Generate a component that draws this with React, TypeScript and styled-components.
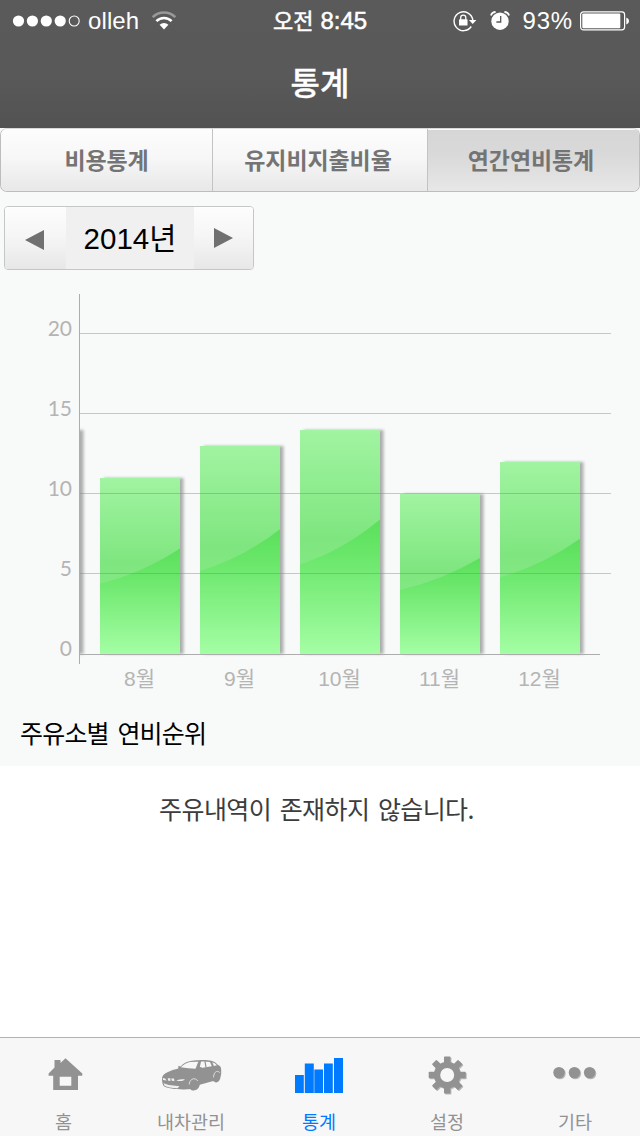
import React from "react";
import styled, { createGlobalStyle } from "styled-components";

const Global = createGlobalStyle`
  * { box-sizing: border-box; }
  body { margin: 0; background: #fff; font-family: "Liberation Sans", "Noto Sans CJK KR", sans-serif; }
  button { font: inherit; margin: 0; padding: 0; border: 0; background: none; }
`;

const Screen = styled.div`
  width: 640px;
  height: 1136px;
  display: flex;
  flex-direction: column;
  overflow: hidden;
  background: #fff;
`;

const Header = styled.header`
  height: 128px;
  flex: none;
  background: linear-gradient(#5a5a5a, #595959 60%, #525252);
  color: #fff;
`;

const StatusBar = styled.div`
  height: 40px;
  display: grid;
  grid-template-columns: 240px 160px 240px;
  align-items: center;
  font-size: 24px;
  line-height: 40px;
`;

const StatusLeft = styled.div`
  display: flex;
  align-items: center;
  padding-left: 12px;
`;

const StatusRight = styled.div`
  display: flex;
  align-items: center;
  justify-content: flex-end;
  gap: 13px;
  padding-right: 10px;
`;

const BatteryGroup = styled.div`
  display: flex;
  align-items: center;
  gap: 7px;
`;

const Carrier = styled.span`
  margin: 1px 12px 0 7px;
  letter-spacing: 0.1px;
`;

const Percent = styled.span`
  margin-top: 1px;
  letter-spacing: 0.8px;
`;

const Clock = styled.div`
  display: flex;
  justify-content: center;
  gap: 7px;
  -webkit-text-stroke: 0.5px #fff;
`;

const ClockLabel = styled.span`
  font-family: "Noto Sans CJK KR", sans-serif;
  font-size: 22px;
  line-height: 36px;
`;

const PageTitle = styled.h1`
  margin: 0;
  height: 88px;
  text-align: center;
  font: 500 32px/83px "Noto Sans CJK KR", sans-serif;
  -webkit-text-stroke: 0.3px #fff;
`;

const Body = styled.main`
  height: 638px;
  flex: none;
  display: flex;
  flex-direction: column;
  background: #f8faf9;
`;

const Tabs = styled.nav`
  height: 64px;
  flex: none;
  display: grid;
  grid-template-columns: 212px 215px 211px;
  border: 1px solid #bdbdbd;
  border-top-color: #d8d8d8;
  border-radius: 7px;
  overflow: hidden;
  background: #fafafa;
`;

const Tab = styled.button<{ $active?: boolean; $trim?: number }>`
  display: flex;
  justify-content: center;
  border-right: 1px solid #c3c3c3;
  margin-top: ${(p) => (p.$active ? "1px" : "0")};
  padding-right: ${(p) => p.$trim ?? 0}px;
  background: ${(p) =>
    p.$active ? "linear-gradient(#d6d6d6, #d9d9d9 40%, #e7e7e7)" : "linear-gradient(#fdfdfd, #f7f7f7 45%, #e8e8e8)"};
  color: #747474;
  font: 700 23px/${(p) => (p.$active ? 58 : 60)}px "Noto Sans CJK KR", sans-serif;
  letter-spacing: -0.1px;
  &:last-child { border-right: 0; }
`;

const YearPicker = styled.div`
  width: 250px;
  height: 64px;
  margin: 14px 0 0 4px;
  flex: none;
  display: grid;
  grid-template-columns: 61px 128px 59px;
  border: 1px solid #c6c6c6;
  border-radius: 4px;
  overflow: hidden;
`;

const YearStep = styled.button`
  display: flex;
  align-items: center;
  justify-content: center;
  background: linear-gradient(#fdfdfd, #f6f6f6 45%, #e7e7e7);
`;

const Year = styled.div`
  background: #f0f0f0;
  text-align: center;
  font-size: 29.5px;
  line-height: 63px;
  color: #000;
`;

const Chart = styled.svg`
  display: block;
  flex: none;
  margin-top: 14px;
`;

const AxisValue = styled.text`
  font-family: Lato, sans-serif;
  font-size: 21px;
  fill: #b4b4b4;
  text-anchor: end;
`;

const MonthLabel = styled.text`
  font-size: 21px;
  fill: #b4b4b4;
  text-anchor: middle;
`;

const SectionTitle = styled.h2`
  margin: 0;
  padding-left: 20px;
  font: 400 25px/56px "Noto Sans CJK KR", sans-serif;
  letter-spacing: -0.8px;
  word-spacing: 3.8px;
  color: #000;
`;

const Empty = styled.p`
  margin: 0;
  flex: 1;
  padding-right: 7px;
  text-align: center;
  font: 400 25px/84px "Noto Sans CJK KR", sans-serif;
  letter-spacing: -0.6px;
  word-spacing: 3.6px;
  color: #3c3c3c;
`;

const BottomBar = styled.nav`
  height: 99px;
  flex: none;
  display: grid;
  grid-template-columns: 127px repeat(4, 128px) 1px;
  border-top: 1px solid #b2b2b2;
  background: #f7f7f7;
`;

const NavItem = styled.button<{ $active?: boolean }>`
  display: flex;
  flex-direction: column;
  align-items: center;
  color: ${(p) => (p.$active ? "#007aff" : "#929292")};
  svg { display: block; margin-top: 14px; }
`;

const NavLabel = styled.span`
  margin-top: 6px;
  font: 400 18.5px/26px "Noto Sans CJK KR", sans-serif;
`;

const BASE = 370;
const UNIT = 16;
const bars = [
  { month: "8월", value: 11 },
  { month: "9월", value: 13 },
  { month: "10월", value: 14 },
  { month: "11월", value: 10 },
  { month: "12월", value: 12 },
];

function Bar({ x, value }: { x: number; value: number }) {
  const h = value * UNIT;
  const y = BASE - h;
  return (
    <g>
      <rect x={x + 4} y={y} width={79.5} height={h} fill="#6e6e6e" opacity={0.55} filter="url(#soft)" />
      <rect x={x} y={y} width={80} height={h} fill="url(#deep)" />
      <path
        d={`M${x} ${y}h80v${h * 0.4}Q${x + 42} ${y + h * 0.54} ${x} ${y + h * 0.6}z`}
        fill="url(#gloss)"
      />
    </g>
  );
}

function MileageChart() {
  return (
    <Chart width="640" height="420" viewBox="0 0 640 420">
      <defs>
        <linearGradient id="deep" x1="0" y1="0" x2="0" y2="1">
          <stop offset="0.4" stopColor="#5be05b" />
          <stop offset="0.55" stopColor="#69e669" />
          <stop offset="1" stopColor="#a4fea4" />
        </linearGradient>
        <linearGradient id="gloss" x1="0" y1="0" x2="0" y2="1">
          <stop offset="0" stopColor="#a1f4a1" />
          <stop offset="0.8" stopColor="#7fe67f" />
          <stop offset="1" stopColor="#82e882" />
        </linearGradient>
        <filter id="soft" x="-10%" y="-10%" width="120%" height="120%">
          <feGaussianBlur stdDeviation="1.4" />
        </filter>
        <clipPath id="plot">
          <rect x="80" y="0" width="560" height="373" />
        </clipPath>
      </defs>
      <g clipPath="url(#plot)">
        <Bar x={0} value={14} />
        {bars.map((b, i) => (
          <Bar key={b.month} x={100 + i * 100} value={b.value} />
        ))}
      </g>
      {[5, 10, 15, 20].map((v) => (
        <rect key={v} x={80} y={BASE - v * UNIT - 1} width={531} height={1} fill="#808080" opacity={0.42} />
      ))}
      <rect x={79} y={10} width={1} height={370} fill="#adadad" />
      <rect x={80} y={BASE} width={520} height={1} fill="#adadad" />
      {[0, 5, 10, 15, 20].map((v) => (
        <AxisValue key={v} x={72} y={BASE + 1.5 - v * UNIT}>
          {v}
        </AxisValue>
      ))}
      {bars.map((b, i) => (
        <MonthLabel key={b.month} x={139.5 + i * 100} y={402}>
          {b.month}
        </MonthLabel>
      ))}
    </Chart>
  );
}

const SignalIcon = () => (
  <svg width="69" height="12" viewBox="0 0 69 12">
    {[6.5, 20.4, 34.3, 48.2].map((x) => (
      <circle key={x} cx={x} cy="6" r="5.6" fill="#fff" />
    ))}
    <circle cx="62.2" cy="6" r="5" fill="none" stroke="#fff" strokeWidth="1.1" />
  </svg>
);

const WifiIcon = () => (
  <svg width="26" height="20" viewBox="0 0 26 20" fill="none">
    <path d="M1.7 6.1a16 16 0 0 1 22.6 0" stroke="#999" strokeWidth="2.6" />
    <path d="M5.4 10.2a10.8 10.8 0 0 1 15.2 0" stroke="#fff" strokeWidth="2.6" />
    <path d="M8.6 13.8a6.2 6.2 0 0 1 8.8 0L13 18.4z" fill="#fff" />
  </svg>
);

const RotationLockIcon = () => (
  <svg width="24" height="22" viewBox="0 0 24 22" fill="none">
    <path d="M18.3 16.5A9.4 9.4 0 1 1 19.8 10" stroke="#fff" strokeWidth="1.4" />
    <path d="M16 10h7.4l-3.7 4z" fill="#fff" />
    <rect x="6" y="9.2" width="8.5" height="6.3" rx="0.6" fill="#fff" />
    <path d="M7.7 9.8V7.6a2.55 2.55 0 0 1 5.1 0v2.2" stroke="#fff" strokeWidth="1.3" />
  </svg>
);

const AlarmIcon = () => (
  <svg width="20" height="20" viewBox="0 0 20 20" fill="none">
    <circle cx="10" cy="10.2" r="8.7" fill="#fff" />
    <path d="M1 4.5q.6-3 4.6-3.7M19 4.5q-.6-3-4.6-3.7" stroke="#fff" strokeWidth="1.8" />
    <path d="M10.7 5v6H6.4" stroke="#585858" strokeWidth="1.3" />
  </svg>
);

const BatteryIcon = () => (
  <svg width="50" height="20" viewBox="0 0 50 20">
    <rect x="0.6" y="0.9" width="44" height="18" rx="2.8" fill="none" stroke="#fff" strokeWidth="1.2" />
    <rect x="2.3" y="2.6" width="38" height="14.6" rx="1" fill="#fff" />
    <path d="M46.3 6.8h.5q2.2 1 2.2 3.2t-2.2 3.2h-.5z" fill="#fff" />
  </svg>
);

const Shadow = () => (
  <defs>
    <filter id="drop" x="-20%" y="-20%" width="150%" height="150%">
      <feDropShadow dx="1" dy="1" stdDeviation="0.7" floodColor="#777" floodOpacity="0.5" />
    </filter>
  </defs>
);

const HomeIcon = () => (
  <svg width="60" height="50" viewBox="0 0 60 50">
    <path
      d="M31.5 6.3 48.3 21.5v2.2H44V38H19.2V23.7h-4.6v-2.2L20.5 15.6V8h6v3z M25.7 24.8v9h11.6v-9z"
      fill="currentColor"
      fillRule="evenodd"
    />
  </svg>
);

const CarIcon = () => (
  <svg width="64" height="50" viewBox="0 0 64 50">
    <path
      d="M3.2 25C4.5 22.5 6 21.3 9 20c4-1.7 7-2.6 10.2-3.4l.3-2.8 2 .6C24 12 26 10.500 28.500 9.700 33 8.300 46 7.200 52.300 8.700 55.500 9.700 57.500 11.200 59 13c2.500 1 3 2.200 3.200 4.600V22L61.200 26.500c-.6 2.300-2 3.900-3.900 3.900-1.300 0-2.300-.5-3-1.400L40.800 32.800c-.8 3.600-3.100 5.700-6.100 5.700-1.500 0-2.700-.5-3.600-1.500C24 38 8 37.200 4.600 34 3.200 31.700 2.600 27.500 3.200 25z"
      fill="currentColor"
    />
    <path
      d="M21.8 15.300C25 12.300 27.500 10.700 31 10.100q3.500-.5 8.300-.4L36.500 16.700q-7-.1-14.700-1.400zM42 9.500q5-.3 9 .4l1.800 4.300-12.200 2zM53.300 10.300q3.200 1.200 4.600 3l-3 .7z"
      fill="#f7f7f7"
    />
    <path d="M46 9.400l1 6" stroke="currentColor" strokeWidth="1.2" />
    <ellipse cx="41.200" cy="16.200" rx="1.800" ry="1.300" fill="currentColor" />
    <path
      d="M3.800 26q2.800 0 3.800 2.400L4 28zM8.700 26.200h2.600v2.700l-2-.1zM12.200 26.400l2.800.2.500 2.300-2.700-.1zM17.500 28.800q1.500-2.100 8.300-1.500-1 2.400-8.300 1.500zM4.500 31.200q7 3.200 15.800 2.800l-1.500 2.300Q9.500 36 5.600 33.800z"
      fill="#f0f0f0"
    />
    <path d="M30.200 32.500c.2-4 3-6.300 6-5.600 1.200.3 2 1 2.500 2.100M54.600 25.500c0-3.600 1.600-6.100 3.700-6.100 1 0 1.900.4 2.500 1.400" stroke="#dedede" strokeWidth="1" fill="none" />
  </svg>
);

const StatsIcon = () => (
  <svg width="48" height="50" viewBox="0 0 48 50" fill="currentColor">
    <rect x="0" y="23" width="8.8" height="18" />
    <rect x="9.8" y="11.500" width="9" height="29.500" />
    <rect x="19.300" y="17.500" width="8.700" height="23.500" />
    <rect x="29" y="11.500" width="8.800" height="29.500" />
    <rect x="39" y="6" width="9" height="35" />
  </svg>
);

const GearIcon = () => (
  <svg width="60" height="50" viewBox="0 0 60 50">
    <Shadow />
    <g filter="url(#drop)" fill="currentColor">
      {[0, 45, 90, 135].map((a) => (
        <rect key={a} x="27" y="4.500" width="6.400" height="37" rx="0.7" transform={`rotate(${a} 30.200 23)`} />
      ))}
      <circle cx="30.200" cy="23" r="13.300" />
    </g>
    <circle cx="30.200" cy="23" r="7" fill="#f7f7f7" />
  </svg>
);

const MoreIcon = () => (
  <svg width="60" height="50" viewBox="0 0 60 50">
    <g filter="url(#drop)" fill="currentColor">
      <circle cx="14" cy="20.600" r="5.700" />
      <circle cx="29.400" cy="20.600" r="5.700" />
      <circle cx="44.600" cy="20.600" r="5.700" />
    </g>
  </svg>
);

const navItems = [
  { label: "홈", icon: <HomeIcon /> },
  { label: "내차관리", icon: <CarIcon /> },
  { label: "통계", icon: <StatsIcon />, active: true },
  { label: "설정", icon: <GearIcon /> },
  { label: "기타", icon: <MoreIcon /> },
];

export default function App() {
  return (
    <Screen>
      <Global />
      <Header>
        <StatusBar>
          <StatusLeft>
            <SignalIcon />
            <Carrier>olleh</Carrier>
            <WifiIcon />
          </StatusLeft>
          <Clock>
            <ClockLabel>오전</ClockLabel>
            <span>8:45</span>
          </Clock>
          <StatusRight>
            <RotationLockIcon />
            <AlarmIcon />
            <BatteryGroup>
              <Percent>93%</Percent>
              <BatteryIcon />
            </BatteryGroup>
          </StatusRight>
        </StatusBar>
        <PageTitle>통계</PageTitle>
      </Header>
      <Body>
        <Tabs>
          <Tab>비용통계</Tab>
          <Tab $trim={4}>유지비지출비율</Tab>
          <Tab $active $trim={5}>연간연비통계</Tab>
        </Tabs>
        <YearPicker>
          <YearStep>
            <svg width="21" height="22" viewBox="0 0 21 22">
              <path d="M0 12 19 2v20z" fill="#707070" />
            </svg>
          </YearStep>
          <Year>2014년</Year>
          <YearStep>
            <svg width="20" height="22" viewBox="0 0 20 22">
              <path d="M0 0v20l19-10z" fill="#707070" />
            </svg>
          </YearStep>
        </YearPicker>
        <MileageChart />
        <SectionTitle>주유소별 연비순위</SectionTitle>
      </Body>
      <Empty>주유내역이 존재하지 않습니다.</Empty>
      <BottomBar>
        {navItems.map((n) => (
          <NavItem key={n.label} $active={n.active}>
            {n.icon}
            <NavLabel>{n.label}</NavLabel>
          </NavItem>
        ))}
      </BottomBar>
    </Screen>
  );
}
